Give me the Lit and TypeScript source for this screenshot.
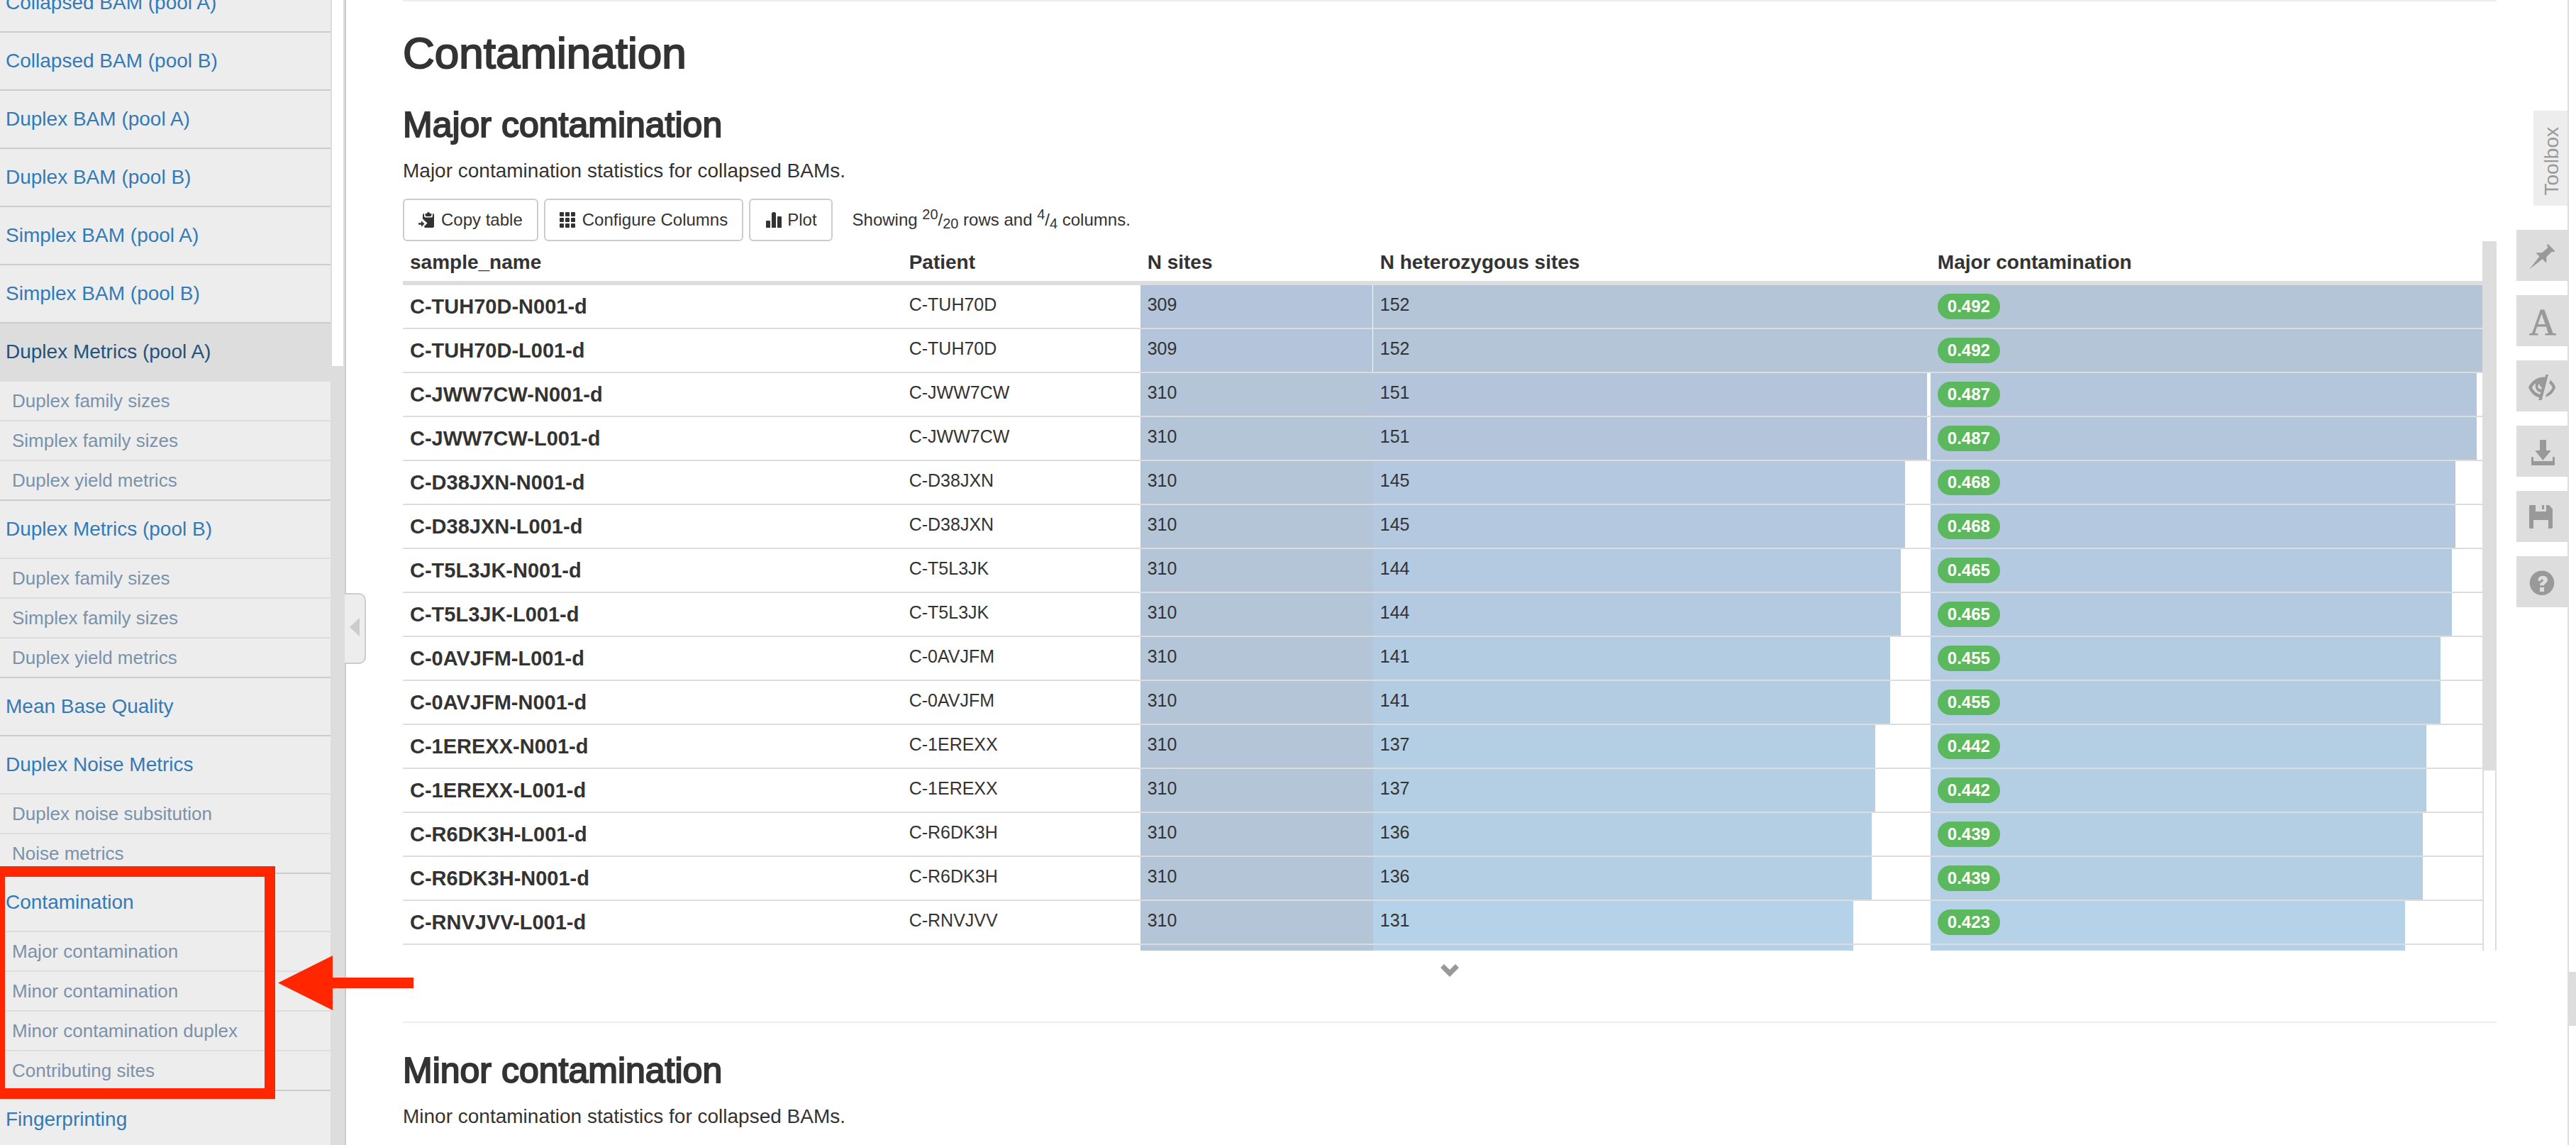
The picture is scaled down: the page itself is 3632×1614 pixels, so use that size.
import { LitElement, html, css, svg, nothing } from "lit";
import { customElement, property, state } from "lit/decorators.js";
import { classMap } from "lit/directives/class-map.js";
import { styleMap } from "lit/directives/style-map.js";

interface NavItem {
  label: string;
  children?: string[];
}

const NAV: NavItem[] = [
  { label: "Collapsed BAM (pool A)" },
  { label: "Collapsed BAM (pool B)" },
  { label: "Duplex BAM (pool A)" },
  { label: "Duplex BAM (pool B)" },
  { label: "Simplex BAM (pool A)" },
  { label: "Simplex BAM (pool B)" },
  {
    label: "Duplex Metrics (pool A)",
    children: ["Duplex family sizes", "Simplex family sizes", "Duplex yield metrics"],
  },
  {
    label: "Duplex Metrics (pool B)",
    children: ["Duplex family sizes", "Simplex family sizes", "Duplex yield metrics"],
  },
  { label: "Mean Base Quality" },
  { label: "Duplex Noise Metrics", children: ["Duplex noise subsitution", "Noise metrics"] },
  {
    label: "Contamination",
    children: [
      "Major contamination",
      "Minor contamination",
      "Minor contamination duplex",
      "Contributing sites",
    ],
  },
  { label: "Fingerprinting" },
];

interface Sample {
  name: string;
  sites: number;
  het: number;
  major: number;
}

const SAMPLES: Sample[] = [
  { name: "C-TUH70D-N001-d", sites: 309, het: 152, major: 0.492 },
  { name: "C-TUH70D-L001-d", sites: 309, het: 152, major: 0.492 },
  { name: "C-JWW7CW-N001-d", sites: 310, het: 151, major: 0.487 },
  { name: "C-JWW7CW-L001-d", sites: 310, het: 151, major: 0.487 },
  { name: "C-D38JXN-N001-d", sites: 310, het: 145, major: 0.468 },
  { name: "C-D38JXN-L001-d", sites: 310, het: 145, major: 0.468 },
  { name: "C-T5L3JK-N001-d", sites: 310, het: 144, major: 0.465 },
  { name: "C-T5L3JK-L001-d", sites: 310, het: 144, major: 0.465 },
  { name: "C-0AVJFM-L001-d", sites: 310, het: 141, major: 0.455 },
  { name: "C-0AVJFM-N001-d", sites: 310, het: 141, major: 0.455 },
  { name: "C-1EREXX-N001-d", sites: 310, het: 137, major: 0.442 },
  { name: "C-1EREXX-L001-d", sites: 310, het: 137, major: 0.442 },
  { name: "C-R6DK3H-L001-d", sites: 310, het: 136, major: 0.439 },
  { name: "C-R6DK3H-N001-d", sites: 310, het: 136, major: 0.439 },
  { name: "C-RNVJVV-L001-d", sites: 310, het: 131, major: 0.423 },
  { name: "C-RNVJVV-N001-d", sites: 310, het: 131, major: 0.423 },
];

const MAX = { sites: 310, het: 152, major: 0.492 };

/* Bar shade by share of the column maximum, highest first. */
const SHADES: [number, string][] = [
  [1, "#b4c5d7"],
  [0.992, "#b4c4db"],
  [0.98, "#b4c6dc"],
  [0.95, "#b4c9df"],
  [0.94, "#b4cae0"],
  [0.92, "#b4cce2"],
  [0.89, "#b4cfe4"],
  [0, "#b5d2e8"],
];

const shade = (share: number): string =>
  (SHADES.find(([from]) => share >= from) ?? SHADES[SHADES.length - 1])[1];

const ICONS = {
  copy: svg`<path d="M9.500 4V3q0-1 1-1h1.500q0-2 2-2t2 2h1.500q1 0 1 1v1q0 2-2 2h-5q-2 0-2-2z"/><path d="M6 4q0-2 2-2v3.500q0 2 2 2h8q2 0 2-2V2q2 0 2 2v16q0 2-2 2H10q-2 0-2-2l4.500-4.500L6 9.500z"/><path d="M0 15.200h4v-3l4.500 4.300-4.500 4.300v-3h-4z"/>`,
  grid: svg`${[0, 8, 16].map((y) =>
    [0, 8, 16].map((x) => svg`<rect x=${x} y=${y} width="6" height="6" rx="1"/>`)
  )}`,
  plot: svg`<path d="M2 22v-9q0-1 1-1h4q1 0 1 1v9zM10 22v-20q0-2 3-2t3 2v20zM18 22v-15q0-1 1-1h4q1 0 1 1v15z"/>`,
  pin: svg`<path d="M18.300 55.600L32.500 37.500 27.300 32.200H36L44.500 25 43 21.500 44.500 20 54 29.500 52.700 31.500 50.200 30.500 42.300 38.300V46.800L36.700 41.300Z"/>`,
  eye: svg`<path fill-rule="evenodd" d="M17 38C21 29.500 29 23 40.500 23.500L41.300 20H45L35.700 56H31.300L32.300 52.500C25 50.500 20 45.500 17 38ZM22 38C24 43 28 46.800 33.600 47.800L34.200 45C28 43.800 25.500 38.500 27.300 32.500 25 33.500 23.300 35.500 22 38ZM30.300 36.500Q30.300 34 32.500 33 32.500 36.500 36 38L35.300 40.500Q30.300 40.500 30.300 36.500Z"/><path d="M47.700 27.500C51 30 53.800 34 55.200 38 52.500 45 48 49.700 41 51.700L42.300 47.500C46.300 45.500 49.200 42 50.800 38 49.500 35.500 48.200 33.800 46.200 32.300Z"/>`,
  download: svg`<path d="M33 35V21q0-1 1-1h7q1 0 1 1V35H48.700L37.400 49 26.300 35ZM21 45q0-1 1-1h2v6h27v-6h2q1 0 1 1v10q0 1-1 1H22q-1 0-1-1Z"/>`,
  save: svg`<path d="M18 21q0-1 1-1h8v9h15v-9h4l5 5.500V52q0 1-1 1h-5V41H24v12h-5q-1 0-1-1ZM36 20h3v6h-3z"/>`,
  help: svg`<path fill-rule="evenodd" d="M36 20.400a17.300 17.300 0 1 1 0 34.600a17.300 17.300 0 1 1 0-34.600ZM33 44v6h6v-6ZM28.300 35h5.700q0-2.500 2-2.500 2 0 2 1.500 0 1.500-2 2.500-3 1.500-3 4.700h6q0-1.500 2-2.800 3-2 3-5 0-5.700-7-5.700-6.500 0-6.700 7.300Z"/>`,
};

@customElement("data-bar")
class DataBar extends LitElement {
  @property({ type: Number }) value = 0;
  @property({ type: Number }) max = 1;
  @property({ type: Boolean }) badge = false;

  static styles = css`
    :host {
      display: grid;
      height: 60px;
      align-items: stretch;
    }
    .bar,
    .value {
      grid-area: 1 / 1;
    }
    .value {
      display: flex;
      align-items: center;
      padding: 0 10px 6px;
    }
    .value.pill {
      padding-bottom: 0;
    }
    .badge {
      padding: 0 14px;
      border-radius: 18px;
      background: #5cb85c;
      color: #fff;
      font-size: 24px;
      font-weight: 700;
      line-height: 36px;
    }
  `;

  render() {
    const share = this.value / this.max;
    return html`
      <div class="bar" style=${styleMap({ width: `${share * 100}%`, background: shade(share) })}></div>
      <div class=${classMap({ value: true, pill: this.badge })}>
        ${this.badge ? html`<span class="badge">${this.value.toFixed(3)}</span>` : this.value}
      </div>
    `;
  }
}

@customElement("report-nav")
class ReportNav extends LitElement {
  @state() private selected = "Duplex Metrics (pool A)";

  static styles = css`
    :host {
      position: relative;
      display: flex;
      flex: none;
      box-sizing: border-box;
      width: 488px;
      border-right: 2px solid #ccc;
      background: #ededed;
    }
    .scroll {
      flex: 1;
      overflow: hidden;
    }
    ul {
      margin: 0;
      padding: 0;
      list-style: none;
    }
    .sections {
      margin-top: -38px;
    }
    a {
      display: block;
      color: #337ab7;
      font-size: 28px;
      line-height: 80px;
      padding: 0 8px;
      border-top: 2px solid #ccc;
      text-decoration: none;
      white-space: nowrap;
    }
    a.selected {
      background: #ddd;
      color: #23527c;
    }
    .sub a {
      color: #7a92a9;
      font-size: 26px;
      line-height: 54px;
      padding: 0 17px;
      border-top-color: #ddd;
    }
    .track {
      display: flex;
      flex-direction: column;
      box-sizing: border-box;
      width: 20px;
      border: 0 solid #ddd;
      border-width: 0 2px;
      background: #fff;
    }
    .thumb {
      flex: 0 0 68%;
      margin: auto -2px 0;
      background: #ddd;
    }
    .toggle {
      position: absolute;
      z-index: 1;
      top: 836px;
      left: 486px;
      display: flex;
      align-items: center;
      justify-content: center;
      width: 30px;
      height: 100px;
      padding: 0 0 4px;
      border: 2px solid #ccc;
      border-left: 0;
      border-radius: 0 10px 10px 0;
      background: #ededed;
      fill: #ccc;
    }
  `;

  private pick(event: Event, label: string) {
    event.preventDefault();
    this.selected = label;
  }

  render() {
    return html`
      <nav class="scroll" aria-label="Report sections">
        <ul class="sections">
          ${NAV.map(
            (item) => html`<li>
              <a
                href="#section"
                class=${classMap({ selected: item.label === this.selected })}
                @click=${(e: Event) => this.pick(e, item.label)}
                >${item.label}</a
              >
              ${item.children
                ? html`<ul class="sub">
                    ${item.children.map((c) => html`<li><a href="#subsection">${c}</a></li>`)}
                  </ul>`
                : nothing}
            </li>`
          )}
        </ul>
      </nav>
      <div class="track"><div class="thumb"></div></div>
      <button class="toggle" aria-label="Hide navigation">
        <svg width="14" height="26" viewBox="0 0 14 26"><path d="M0 13L14 0V26Z" /></svg>
      </button>
    `;
  }
}

@customElement("contamination-table")
class ContaminationTable extends LitElement {
  static styles = css`
    :host {
      display: block;
    }
    .toolbar {
      display: flex;
      align-items: center;
      gap: 8px;
      font-size: 24px;
    }
    .btn {
      display: flex;
      align-items: center;
      gap: 8px;
      box-sizing: border-box;
      height: 60px;
      padding: 0 20px;
      border: 2px solid #ccc;
      border-radius: 6px;
      background: #fff;
      color: #333;
      fill: #333;
      font: inherit;
      white-space: nowrap;
    }
    .status {
      padding-left: 20px;
      line-height: 34px;
      white-space: nowrap;
    }
    sup,
    sub {
      font-size: 20px;
      line-height: 0;
    }
    sup {
      vertical-align: 9px;
    }
    sub {
      vertical-align: -4px;
    }
    .viewport {
      display: flex;
      max-height: 1000px;
      overflow: hidden;
    }
    table {
      flex: 1;
      table-layout: fixed;
      width: 100%;
      border-spacing: 0;
    }
    .c-name {
      width: 24%;
    }
    .c-patient {
      width: 11.46%;
    }
    .c-sites {
      width: 11.19%;
    }
    .c-het {
      width: 26.81%;
    }
    th,
    td {
      padding: 0;
      text-align: left;
    }
    thead th {
      padding: 12px 10px 8px;
      border-bottom: 4px solid #ddd;
      font-size: 28px;
      line-height: 36px;
    }
    tbody th,
    tbody td {
      border-top: 2px solid #ddd;
      font-size: 25px;
    }
    tbody th {
      padding: 0 10px;
      font-size: 29px;
      line-height: 60px;
    }
    .patient {
      padding: 0 10px 6px;
      line-height: 54px;
    }
    .track {
      flex: none;
      box-sizing: border-box;
      width: 20px;
      height: 1000px;
      border: 0 solid #ddd;
      border-width: 0 2px;
    }
    .thumb {
      height: 746px;
      margin: 0 -2px;
      background: #ddd;
    }
    .expand {
      display: flex;
      align-items: center;
      justify-content: center;
      width: 100%;
      height: 56px;
      padding: 0;
      border: 0;
      background: none;
    }
  `;

  render() {
    return html`
      <div class="toolbar">
        <button class="btn">
          <svg width="24" height="24" viewBox="0 -1 24 24">${ICONS.copy}</svg>Copy table
        </button>
        <button class="btn">
          <svg width="24" height="24" viewBox="0 -1 24 24">${ICONS.grid}</svg>Configure Columns
        </button>
        <button class="btn">
          <svg width="24" height="24" viewBox="0 -1 24 24">${ICONS.plot}</svg>Plot
        </button>
        <span class="status"
          >Showing <sup>20</sup>/<sub>20</sub> rows and <sup>4</sup>/<sub>4</sub> columns.</span
        >
      </div>
      <div class="viewport">
        <table>
          <colgroup>
            <col class="c-name" />
            <col class="c-patient" />
            <col class="c-sites" />
            <col class="c-het" />
            <col />
          </colgroup>
          <thead>
            <tr>
              <th scope="col">sample_name</th>
              <th scope="col">Patient</th>
              <th scope="col">N sites</th>
              <th scope="col">N heterozygous sites</th>
              <th scope="col">Major contamination</th>
            </tr>
          </thead>
          <tbody>
            ${SAMPLES.map(
              (s) => html`<tr>
                <th scope="row">${s.name}</th>
                <td class="patient">${s.name.slice(0, 8)}</td>
                <td><data-bar .value=${s.sites} .max=${MAX.sites}></data-bar></td>
                <td><data-bar .value=${s.het} .max=${MAX.het}></data-bar></td>
                <td><data-bar badge .value=${s.major} .max=${MAX.major}></data-bar></td>
              </tr>`
            )}
          </tbody>
        </table>
        <div class="track"><div class="thumb"></div></div>
      </div>
      <button class="expand" aria-label="Expand table">
        <svg width="26" height="18" viewBox="0 0 26 18">
          <path d="M0 5L5 0 13 8 21 0 26 5 13 18Z" fill="#999" />
        </svg>
      </button>
    `;
  }
}

@customElement("report-toolbox")
class ReportToolbox extends LitElement {
  static styles = css`
    :host {
      display: flex;
      flex-direction: column;
      align-items: flex-end;
      gap: 20px;
    }
    .label {
      display: flex;
      align-items: center;
      justify-content: center;
      box-sizing: border-box;
      width: 48px;
      height: 134px;
      margin-bottom: 14px;
      padding: 8px 0 0 4px;
      background: #ededed;
      color: #999;
      font-size: 28px;
      writing-mode: sideways-lr;
    }
    button {
      display: flex;
      align-items: center;
      justify-content: center;
      width: 72px;
      height: 72px;
      padding: 0;
      border: 0;
      background: #ddd;
      color: #999;
      fill: #999;
    }
    .letter {
      padding: 4px 0 0 2px;
      font: 52px "Liberation Serif", serif;
      -webkit-text-stroke: 1px #999;
    }
  `;

  private tool(name: string, icon: unknown) {
    return html`<button aria-label=${name}>
      <svg width="72" height="72" viewBox="0 0 72 72">${icon}</svg>
    </button>`;
  }

  render() {
    return html`
      <span class="label">Toolbox</span>
      ${this.tool("Highlight samples", ICONS.pin)}
      <button aria-label="Rename samples"><span class="letter">A</span></button>
      ${this.tool("Hide samples", ICONS.eye)} ${this.tool("Export plots", ICONS.download)}
      ${this.tool("Save settings", ICONS.save)} ${this.tool("Help", ICONS.help)}
    `;
  }
}

@customElement("app-root")
class AppRoot extends LitElement {
  static styles = css`
    :host {
      position: relative;
      display: flex;
      height: 100vh;
      overflow: hidden;
      background: #fff;
      color: #333;
      font-family: "Liberation Sans", Arial, sans-serif;
      font-size: 28px;
    }
    main {
      flex: 1;
      min-width: 0;
      overflow: hidden;
      padding: 0 100px 0 80px;
      border-right: 2px solid #ddd;
    }
    hr {
      height: 2px;
      margin: 0;
      border: 0;
      background: #eee;
    }
    h1,
    h2 {
      font-weight: 400;
      -webkit-text-stroke: 2px #333;
    }
    h1 {
      margin: 39px 0 0;
      font-size: 62px;
      line-height: 68px;
    }
    h2 {
      margin: 39px 0 17px;
      font-size: 50px;
      line-height: 56px;
    }
    p {
      margin: 0 0 19px;
      line-height: 40px;
    }
    .divider {
      margin-top: 44px;
    }
    .page-track {
      display: flex;
      flex: none;
      flex-direction: column;
      width: 10px;
    }
    .page-thumb {
      height: 76px;
      margin: auto 0 168px;
      background: #ddd;
    }
    .tools {
      position: absolute;
      top: 156px;
      right: 12px;
    }
    .callout {
      position: absolute;
      top: 1221px;
      left: -8px;
      box-sizing: border-box;
      width: 396px;
      height: 328px;
      border: 15px solid #ff2600;
      pointer-events: none;
    }
    .arrow {
      position: absolute;
      top: 1347px;
      left: 392px;
      fill: #ff2600;
      pointer-events: none;
    }
  `;

  render() {
    return html`
      <report-nav></report-nav>
      <main>
        <hr />
        <h1>Contamination</h1>
        <h2>Major contamination</h2>
        <p>Major contamination statistics for collapsed BAMs.</p>
        <contamination-table></contamination-table>
        <hr class="divider" />
        <h2>Minor contamination</h2>
        <p>Minor contamination statistics for collapsed BAMs.</p>
      </main>
      <div class="page-track"><div class="page-thumb"></div></div>
      <report-toolbox class="tools"></report-toolbox>
      <div class="callout"></div>
      <svg class="arrow" width="191" height="77" viewBox="0 0 191 77">
        <path d="M0 38.500L77 0V31H191V46H77V77Z" />
      </svg>
    `;
  }
}
